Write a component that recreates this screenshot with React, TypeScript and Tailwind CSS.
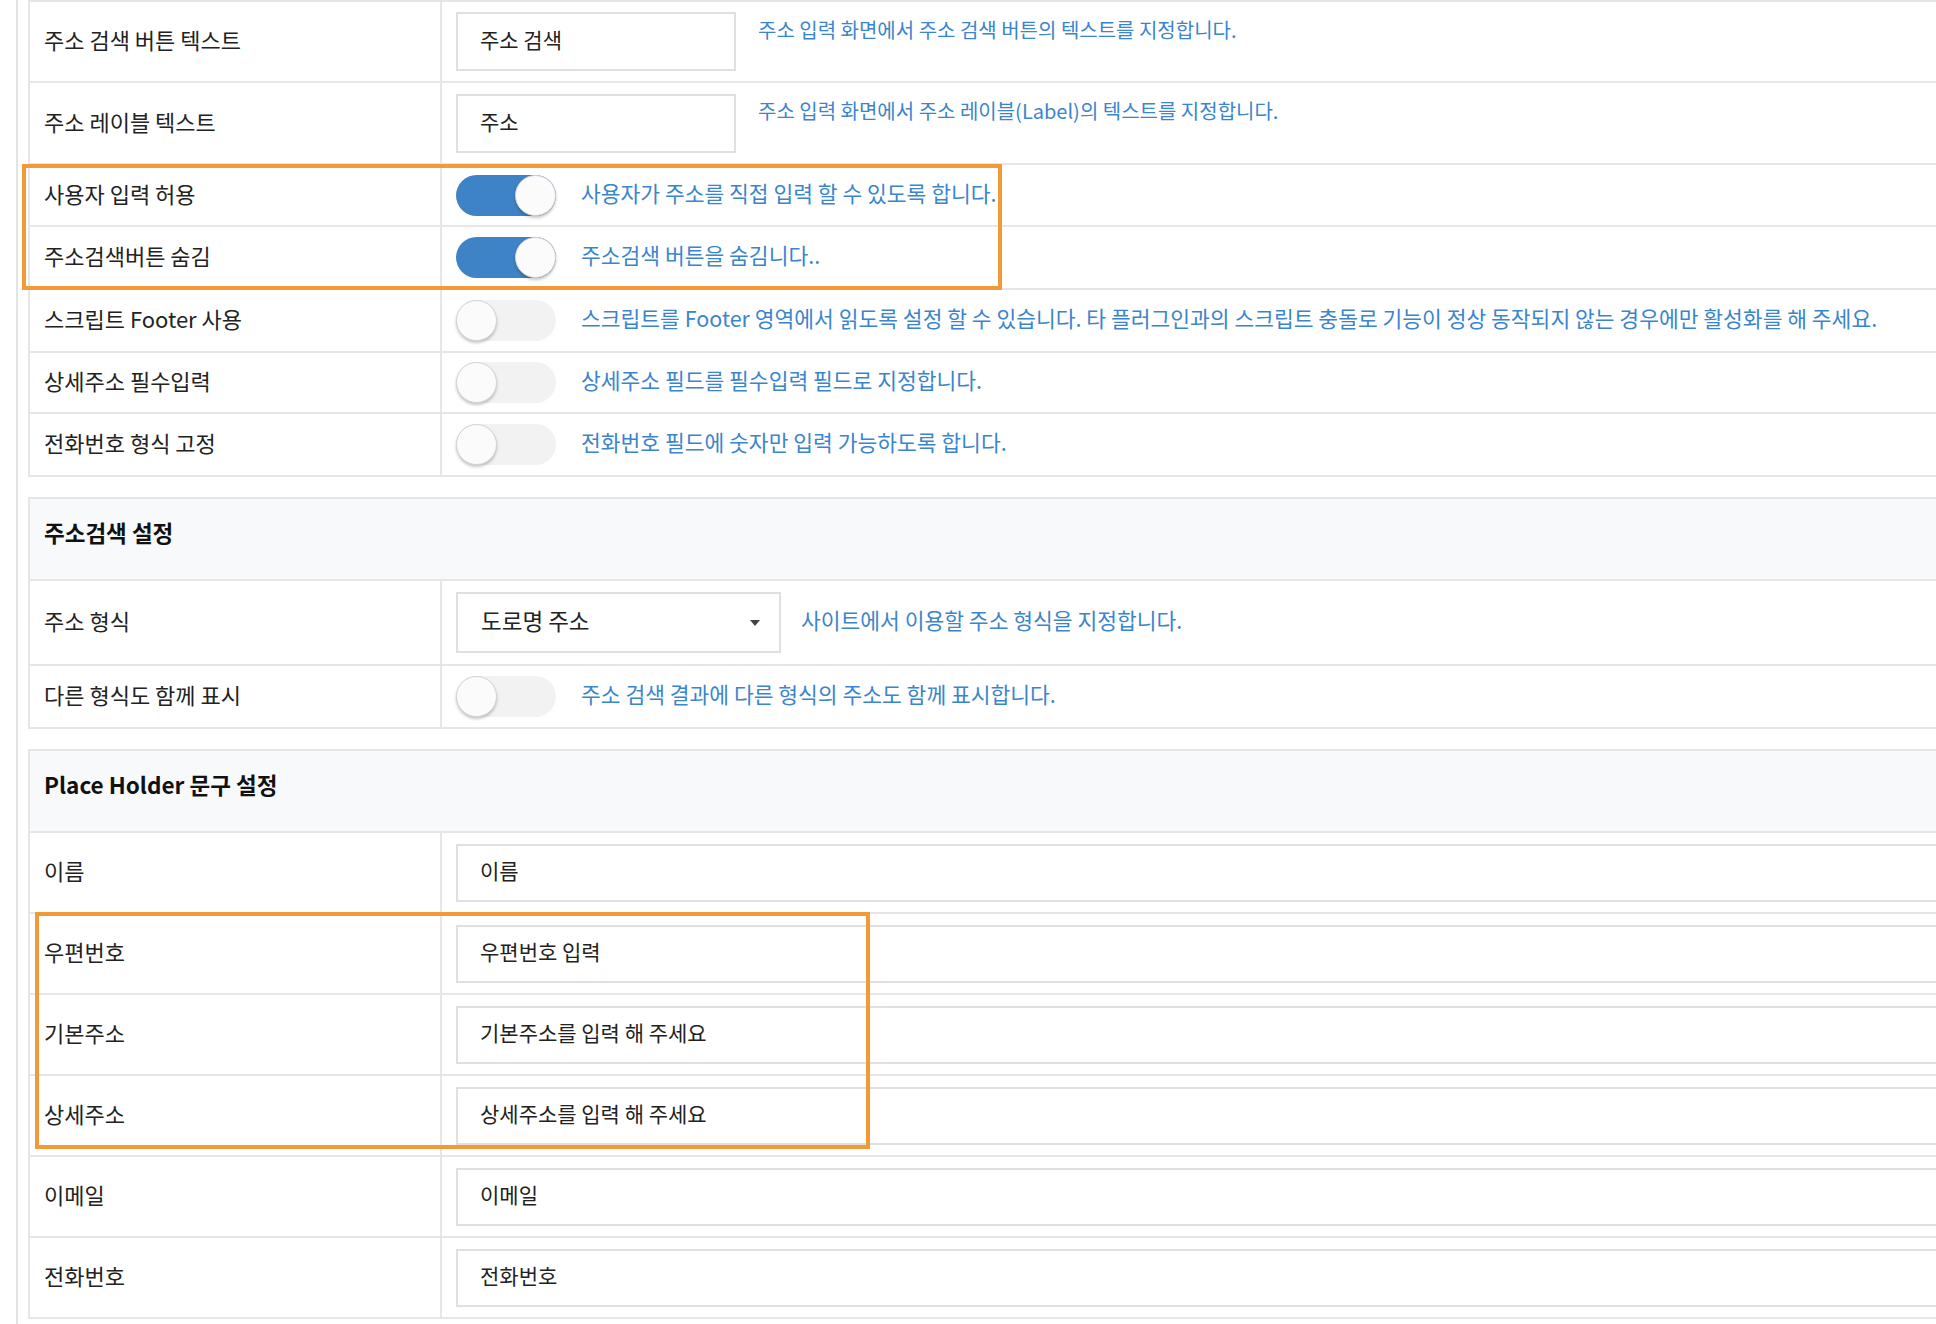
const LABEL = "w-[412px] shrink-0 border-r-2 border-[#e6e6e6] pl-[14px] pb-[4px] flex items-center text-[22px] text-[#222]";
const DESC = "text-[21.5px] text-[#3a85cc] whitespace-nowrap mb-[4px]";

function Toggle({ on }: { on: boolean }) {
  return (
    <div
      className={
        on
          ? "relative w-[100px] h-[41px] rounded-full bg-[#3f83c7] shrink-0"
          : "relative w-[100px] h-[41px] rounded-full bg-[#f2f2f2] shrink-0"
      }
    >
      <div
        className={
          on
            ? "absolute right-0 top-0 w-[41px] h-[41px] rounded-full bg-[#fbfbfb] border border-[#d4d4d4] shadow-[0_2px_3px_rgba(0,0,0,0.22)]"
            : "absolute left-0 top-0 w-[41px] h-[41px] rounded-full bg-[#fbfbfb] border border-[#d4d4d4] shadow-[0_2px_3px_rgba(0,0,0,0.22)]"
        }
      />
    </div>
  );
}

function TextRow({ label, value, desc, h }: { label: string; value: string; desc: string; h: string }) {
  return (
    <div className={"flex border-b-2 border-[#e6e6e6] " + h}>
      <div className={LABEL}>{label}</div>
      <div className="flex-1 flex items-center pl-[14px]">
        <div className="w-[280px] h-[59px] border-2 border-[#e0e0e0] flex items-center pl-[22px] pb-[3px] text-[21px] text-[#222]">
          {value}
        </div>
        <div className="self-start mt-[13px] ml-[22px] text-[20px] text-[#3a85cc] whitespace-nowrap">{desc}</div>
      </div>
    </div>
  );
}

function ToggleRow({ label, on, desc, h }: { label: string; on: boolean; desc: string; h: string }) {
  return (
    <div className={"flex border-b-2 border-[#e6e6e6] " + h}>
      <div className={LABEL}>{label}</div>
      <div className="flex-1 flex items-center pl-[14px]">
        <Toggle on={on} />
        <div className={"ml-[25px] " + DESC}>{desc}</div>
      </div>
    </div>
  );
}

function Header({ title }: { title: string }) {
  return (
    <div className="h-[82px] bg-[#f8f9fa] border-b-2 border-[#e6e6e6] flex items-center pl-[14px] pb-[12px] text-[22.5px] font-bold text-[#111]">
      {title}
    </div>
  );
}

function InputRow({ label, value }: { label: string; value: string }) {
  return (
    <div className="flex h-[81px] border-b-2 border-[#e6e6e6]">
      <div className={LABEL}>{label}</div>
      <div className="flex-1 flex items-center pl-[14px] pr-[14px]">
        <div className="flex-1 h-[58px] border-2 border-[#e0e0e0] flex items-center pl-[22px] pb-[3px] text-[21px] text-[#222]">
          {value}
        </div>
      </div>
    </div>
  );
}

export default function App() {
  return (
    <div className="relative w-[1936px] h-[1324px] overflow-hidden bg-white font-['Noto_Sans_CJK_KR','Noto_Sans',sans-serif]">
      <div className="ml-[16px] h-full border-l-2 border-[#e3e3e3] pl-[10px]">
        <div className="w-[2000px]">
          <div className="border-t-2 border-l-2 border-[#e6e6e6]">
            <TextRow h="h-[81px]" label="주소 검색 버튼 텍스트" value="주소 검색" desc="주소 입력 화면에서 주소 검색 버튼의 텍스트를 지정합니다." />
            <TextRow h="h-[82px]" label="주소 레이블 텍스트" value="주소" desc="주소 입력 화면에서 주소 레이블(Label)의 텍스트를 지정합니다." />
            <ToggleRow h="h-[62px]" label="사용자 입력 허용" on desc="사용자가 주소를 직접 입력 할 수 있도록 합니다." />
            <ToggleRow h="h-[63px]" label="주소검색버튼 숨김" on desc="주소검색 버튼을 숨김니다.." />
            <ToggleRow
              h="h-[63px]"
              label="스크립트 Footer 사용"
              on={false}
              desc="스크립트를 Footer 영역에서 읽도록 설정 할 수 있습니다. 타 플러그인과의 스크립트 충돌로 기능이 정상 동작되지 않는 경우에만 활성화를 해 주세요."
            />
            <ToggleRow h="h-[61px]" label="상세주소 필수입력" on={false} desc="상세주소 필드를 필수입력 필드로 지정합니다." />
            <ToggleRow h="h-[63px]" label="전화번호 형식 고정" on={false} desc="전화번호 필드에 숫자만 입력 가능하도록 합니다." />
          </div>

          <div className="mt-[20px] border-t-2 border-l-2 border-[#e6e6e6]">
            <Header title="주소검색 설정" />
            <div className="flex h-[85px] border-b-2 border-[#e6e6e6]">
              <div className={LABEL}>주소 형식</div>
              <div className="flex-1 flex items-center pl-[14px]">
                <div className="w-[325px] h-[61px] border-2 border-[#e0e0e0] flex items-center justify-between pl-[23px] pr-[19px] text-[22.5px] text-[#222]">
                  <span className="mb-[3px]">도로명 주소</span>
                  <span className="w-0 h-0 border-l-[5.5px] border-r-[5.5px] border-t-[6px] border-l-transparent border-r-transparent border-t-[#444]" />
                </div>
                <div className={"ml-[20px] " + DESC}>사이트에서 이용할 주소 형식을 지정합니다.</div>
              </div>
            </div>
            <ToggleRow h="h-[63px]" label="다른 형식도 함께 표시" on={false} desc="주소 검색 결과에 다른 형식의 주소도 함께 표시합니다." />
          </div>

          <div className="mt-[20px] border-t-2 border-l-2 border-[#e6e6e6]">
            <Header title="Place Holder 문구 설정" />
            <InputRow label="이름" value="이름" />
            <InputRow label="우편번호" value="우편번호 입력" />
            <InputRow label="기본주소" value="기본주소를 입력 해 주세요" />
            <InputRow label="상세주소" value="상세주소를 입력 해 주세요" />
            <InputRow label="이메일" value="이메일" />
            <InputRow label="전화번호" value="전화번호" />
          </div>
        </div>
      </div>

      <div className="absolute left-[22px] top-[164px] w-[980px] h-[126px] border-4 border-[#f29a38] pointer-events-none" />
      <div className="absolute left-[35px] top-[912px] w-[835px] h-[237px] border-4 border-[#f29a38] pointer-events-none" />
    </div>
  );
}
